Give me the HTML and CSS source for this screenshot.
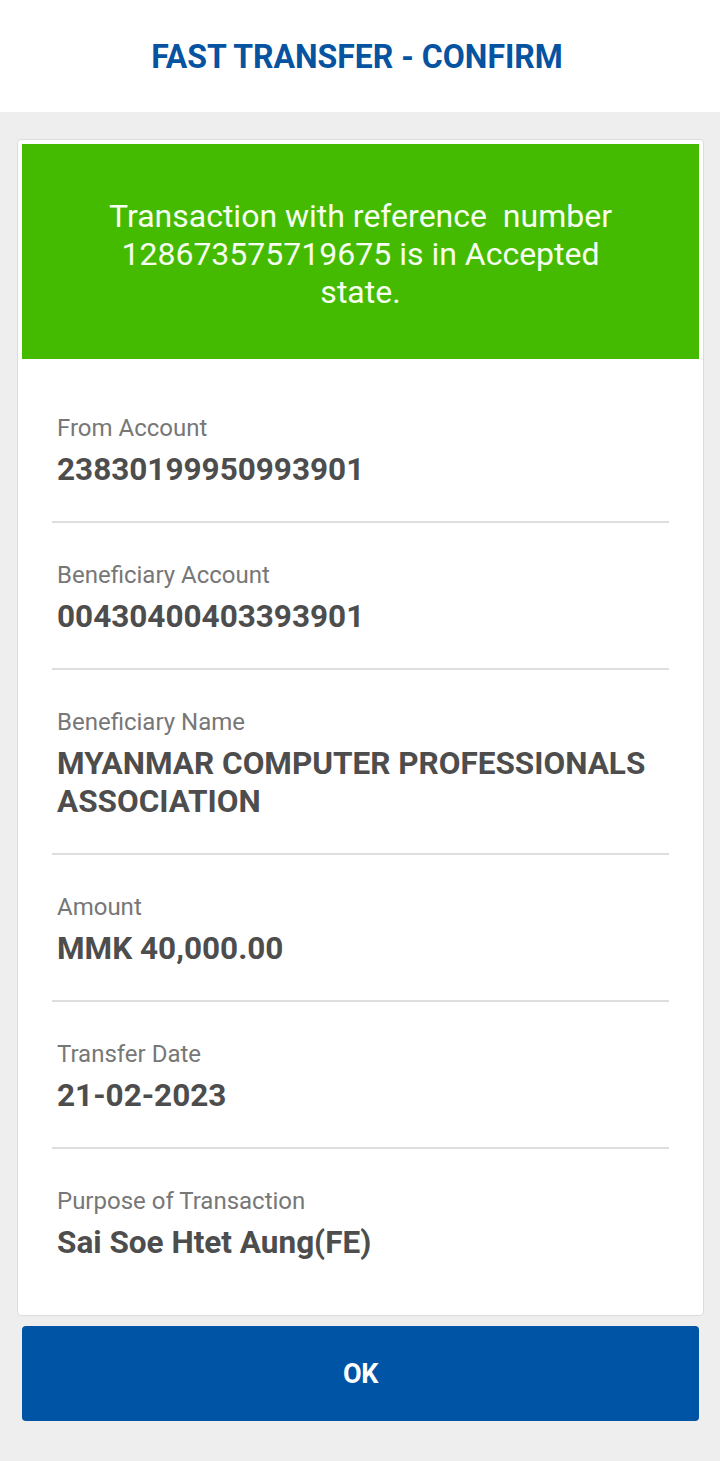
FILE: index.html
```html
<!DOCTYPE html>
<html lang="en">
<head>
<meta charset="utf-8">
<title>Fast Transfer - Confirm</title>
<link rel="stylesheet" href="styles.css">
</head>
<body>
<header class="app-header">
  <h1 class="title">FAST TRANSFER - CONFIRM</h1>
</header>
<main class="content">
  <section class="card">
    <div class="banner">
      <p class="banner-text">Transaction with reference&nbsp; number<br>128673575719675 is in Accepted<br>state.</p>
    </div>
    <dl class="details">
      <div class="row">
        <dt class="label">From Account</dt>
        <dd class="value">23830199950993901</dd>
      </div>
      <div class="row">
        <dt class="label">Beneficiary Account</dt>
        <dd class="value">00430400403393901</dd>
      </div>
      <div class="row">
        <dt class="label">Beneficiary Name</dt>
        <dd class="value">MYANMAR COMPUTER PROFESSIONALS ASSOCIATION</dd>
      </div>
      <div class="row">
        <dt class="label">Amount</dt>
        <dd class="value">MMK 40,000.00</dd>
      </div>
      <div class="row">
        <dt class="label">Transfer Date</dt>
        <dd class="value">21-02-2023</dd>
      </div>
      <div class="row">
        <dt class="label">Purpose of Transaction</dt>
        <dd class="value">Sai Soe Htet Aung(FE)</dd>
      </div>
    </dl>
  </section>
  <button class="ok-btn" type="button">OK</button>
</main>
</body>
</html>
```

FILE: styles.css
```css
* { box-sizing: border-box; }
html, body {
  margin: 0;
  padding: 0;
}
body {
  font-family: Roboto, "Noto Sans", "Liberation Sans", sans-serif;
  background: #eeeeee;
  width: 720px;
  min-height: 1461px;
}
.app-header {
  background: #ffffff;
  height: 112px;
  display: flex;
  align-items: center;
  justify-content: center;
  padding-right: 6px;
}
.title {
  margin: 0;
  font-size: 32px;
  font-weight: 700;
  color: #0553a1;
  line-height: 1;
  transform: scaleY(1.06);
}
.content {
  padding: 27px 16px 0 17px;
  display: flex;
  flex-direction: column;
}
.card {
  background: #ffffff;
  border: 1px solid #dcdcdc;
  border-radius: 4px;
  padding: 4px 4px 0 4px;
}
.banner {
  background: #44bb00;
  height: 215px;
  display: flex;
  align-items: center;
  justify-content: center;
  padding-top: 4px;
}
.banner-text {
  margin: 0;
  color: #f6fff0;
  font-size: 32px;
  line-height: 38px;
  text-align: center;
}
.details {
  margin: 0;
  padding: 0 30px 53px 30px;
}
.row {
  padding: 39px 0 32px 5px;
  border-bottom: 2px solid #dedede;
}
.row:first-child {
  padding-top: 56px;
}
.row:last-child {
  border-bottom: none;
  padding-bottom: 0;
}
.label {
  margin: 0;
  font-size: 24px;
  line-height: 26px;
  color: #777777;
}
.value {
  margin: 10px 0 0 0;
  font-size: 31.5px;
  line-height: 38px;
  font-weight: 700;
  color: #4d4d4d;
}
.ok-btn {
  margin: 10px 5px 0 5px;
  height: 95px;
  border: none;
  border-radius: 4px;
  background: #0054a5;
  color: #ffffff;
  font-family: Roboto, "Liberation Sans", sans-serif;
  font-size: 27px;
  font-weight: 700;
  letter-spacing: -0.5px;
}
```
